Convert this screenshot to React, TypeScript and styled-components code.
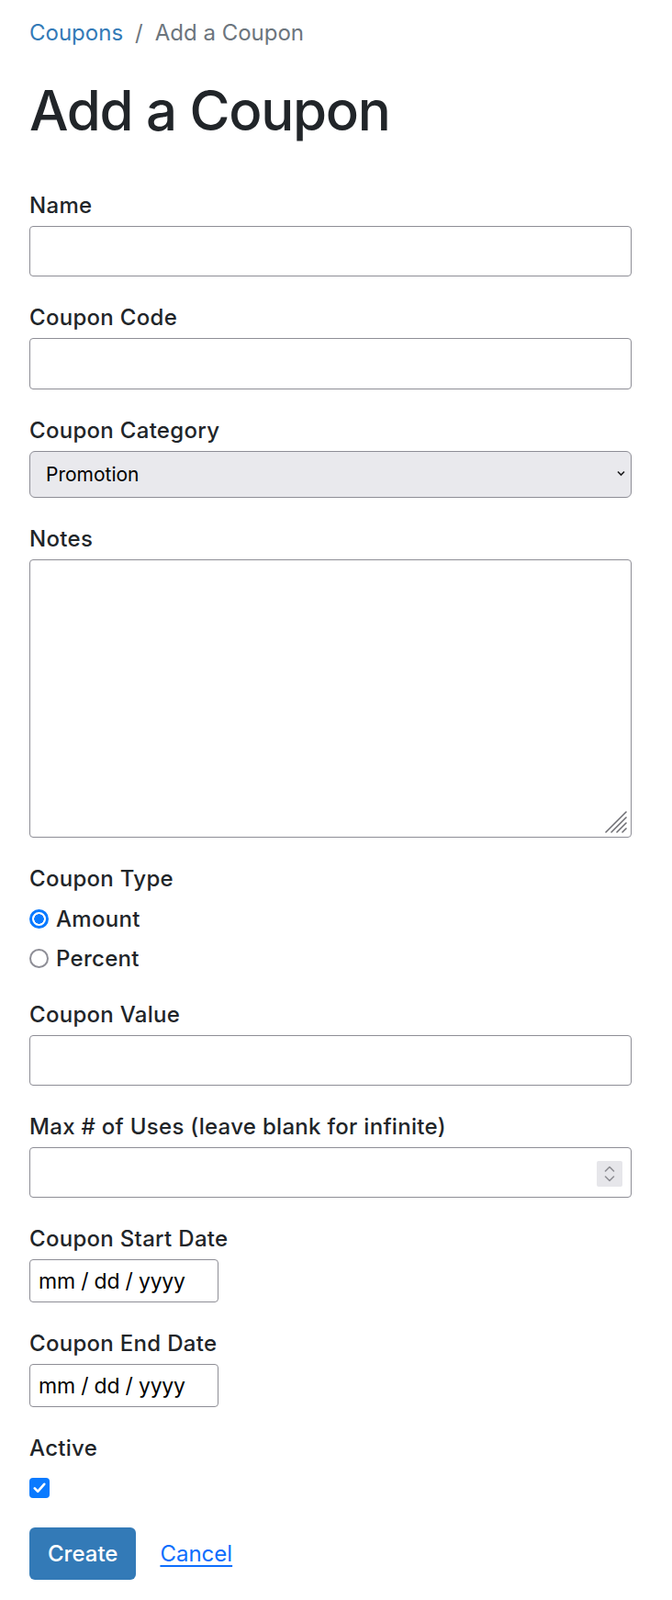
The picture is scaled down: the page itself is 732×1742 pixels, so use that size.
import * as React from 'react'
import styled, { createGlobalStyle, css } from 'styled-components'

const TEXT = '#212529'
const BORDER = '#8e8e96'
const ACCENT = '#0a7aff'

const GlobalStyle = createGlobalStyle`
  html, body {
    margin: 0;
    padding: 0;
    background: #ffffff;
  }
  body {
    font-family: Inter, "Noto Sans", "Liberation Sans", sans-serif;
    color: ${TEXT};
  }
  * {
    box-sizing: border-box;
  }
`

const Page = styled.div`
  padding: 18px 44px 24px 32px;
`

const Breadcrumb = styled.nav`
  display: flex;
  align-items: center;
  font-size: 24px;
  line-height: 36px;
`

const CrumbLink = styled.a`
  color: #337ab7;
  text-decoration: none;
`

const CrumbSeparator = styled.span`
  color: #6c757d;
  padding: 0 13px;
`

const CrumbCurrent = styled.span`
  color: #6c757d;
`

const Heading = styled.h1`
  margin: 30px 0 53px;
  font-size: 60px;
  line-height: 72px;
  font-weight: 500;
  letter-spacing: -1.3px;
`

const Form = styled.form`
  display: flex;
  flex-direction: column;
`

const Group = styled.div<{ tight?: boolean }>`
  margin-bottom: ${({ tight }) => (tight ? '25px' : '30px')};
`

const Label = styled.label`
  display: block;
  font-size: 24px;
  line-height: 29px;
  font-weight: 500;
  letter-spacing: 0.3px;
  margin-bottom: 8px;
`

const fieldBase = css`
  display: block;
  width: 100%;
  border: 1px solid ${BORDER};
  border-radius: 4px;
  background: #ffffff;
  font-family: inherit;
  font-size: 22px;
  color: #000000;
  outline: none;
  appearance: none;
`

const TextInput = styled.input<{ tall?: boolean }>`
  ${fieldBase};
  height: ${({ tall }) => (tall ? '56px' : '55px')};
  padding: 0 12px;
`

const FieldWrap = styled.div`
  position: relative;
`

const Select = styled.select`
  ${fieldBase};
  height: 51px;
  padding: 0 40px 0 17px;
  background: #e9e9ed;
  border-radius: 6px;
  font-size: 21px;
`

const Chevron = styled.svg`
  position: absolute;
  right: 7px;
  top: 21px;
  width: 9px;
  height: 7px;
  pointer-events: none;
`

const TextArea = styled.textarea`
  ${fieldBase};
  height: 303px;
  padding: 10px 12px;
  resize: none;
`

const Grip = styled.svg`
  position: absolute;
  right: 4px;
  bottom: 4px;
  width: 26px;
  height: 26px;
  pointer-events: none;
`

const Spinner = styled.div`
  position: absolute;
  right: 10px;
  top: 15px;
  width: 28px;
  height: 28px;
  background: #e6e6ea;
  border-radius: 2px;
  display: flex;
  align-items: center;
  justify-content: center;
  pointer-events: none;
`

const DateInput = styled.input`
  ${fieldBase};
  width: 206px;
  height: 47px;
  padding: 0 9px;
  font-size: 23px;
  letter-spacing: -0.2px;

  &::placeholder {
    color: #000000;
    opacity: 1;
  }
`

const RadioList = styled.div`
  display: flex;
  flex-direction: column;
  margin-top: 6px;
`

const RadioRow = styled.label`
  display: flex;
  align-items: center;
  height: 43px;
  font-size: 24px;
  font-weight: 500;
  letter-spacing: 0.3px;
  gap: 8px;
`

const RadioMark = styled.span<{ checked?: boolean }>`
  width: 21px;
  height: 21px;
  border-radius: 50%;
  flex: none;
  ${({ checked }) =>
    checked
      ? css`
          border: 3px solid ${ACCENT};
          background: radial-gradient(circle, ${ACCENT} 0 5px, #ffffff 5.5px);
        `
      : css`
          border: 2.5px solid #8e8e96;
          background: #ffffff;
        `}
`

const CheckMark = styled.span`
  display: flex;
  align-items: center;
  justify-content: center;
  width: 22px;
  height: 22px;
  margin-top: 18px;
  border-radius: 4px;
  background: ${ACCENT};
`

const Actions = styled.div`
  display: flex;
  align-items: center;
  gap: 26px;
  margin-top: 2px;
`

const Button = styled.button`
  height: 57px;
  padding: 0 20px;
  border: none;
  border-radius: 6px;
  background: #337ab7;
  color: #ffffff;
  font-family: inherit;
  font-size: 24px;
  font-weight: 500;
  cursor: pointer;
`

const CancelLink = styled.a`
  color: #0d6efd;
  font-size: 24px;
  text-decoration: underline;
  text-underline-offset: 4px;
  text-decoration-thickness: 2px;
`

const App: React.FC = () => {
  return (
    <Page>
      <GlobalStyle />
      <Breadcrumb>
        <CrumbLink href="#">Coupons</CrumbLink>
        <CrumbSeparator>/</CrumbSeparator>
        <CrumbCurrent>Add a Coupon</CrumbCurrent>
      </Breadcrumb>

      <Heading>Add a Coupon</Heading>

      <Form onSubmit={(e) => e.preventDefault()}>
        <Group>
          <Label>Name</Label>
          <TextInput type="text" />
        </Group>

        <Group>
          <Label>Coupon Code</Label>
          <TextInput type="text" tall />
        </Group>

        <Group>
          <Label>Coupon Category</Label>
          <FieldWrap>
            <Select defaultValue="promotion">
              <option value="promotion">Promotion</option>
            </Select>
            <Chevron viewBox="0 0 9 7">
              <path d="M1 1.5 L4.5 5 L8 1.5" fill="none" stroke="#1d1d1f" strokeWidth="1.6" />
            </Chevron>
          </FieldWrap>
        </Group>

        <Group>
          <Label>Notes</Label>
          <FieldWrap>
            <TextArea />
            <Grip viewBox="0 0 26 26">
              <g stroke="#6e6e73" strokeWidth="1.6" strokeLinecap="round">
                <line x1="2" y1="24" x2="24" y2="2" />
                <line x1="8" y1="24" x2="24" y2="8" />
                <line x1="14" y1="24" x2="24" y2="14" />
                <line x1="20" y1="24" x2="24" y2="20" />
              </g>
            </Grip>
          </FieldWrap>
        </Group>

        <Group tight>
          <Label>Coupon Type</Label>
          <RadioList>
            <RadioRow>
              <RadioMark checked />
              Amount
            </RadioRow>
            <RadioRow>
              <RadioMark />
              Percent
            </RadioRow>
          </RadioList>
        </Group>

        <Group>
          <Label>Coupon Value</Label>
          <TextInput type="text" />
        </Group>

        <Group>
          <Label>Max # of Uses (leave blank for infinite)</Label>
          <FieldWrap>
            <TextInput type="text" />
            <Spinner>
              <svg width="14" height="20" viewBox="0 0 14 20">
                <g fill="none" stroke="#8e8e93" strokeWidth="1.6" strokeLinecap="round" strokeLinejoin="round">
                  <path d="M2.5 7 L7 2.5 L11.5 7" />
                  <path d="M2.5 13 L7 17.5 L11.5 13" />
                </g>
              </svg>
            </Spinner>
          </FieldWrap>
        </Group>

        <Group>
          <Label>Coupon Start Date</Label>
          <DateInput type="text" placeholder="mm / dd / yyyy" />
        </Group>

        <Group>
          <Label>Coupon End Date</Label>
          <DateInput type="text" placeholder="mm / dd / yyyy" />
        </Group>

        <Group>
          <Label>Active</Label>
          <CheckMark>
            <svg width="14" height="12" viewBox="0 0 14 12">
              <path d="M1.8 6.4 L5.2 9.8 L12.2 1.8" fill="none" stroke="#ffffff" strokeWidth="2.6" strokeLinecap="round" strokeLinejoin="round" />
            </svg>
          </CheckMark>
        </Group>

        <Actions>
          <Button type="submit">Create</Button>
          <CancelLink href="#">Cancel</CancelLink>
        </Actions>
      </Form>
    </Page>
  )
}

export default App
